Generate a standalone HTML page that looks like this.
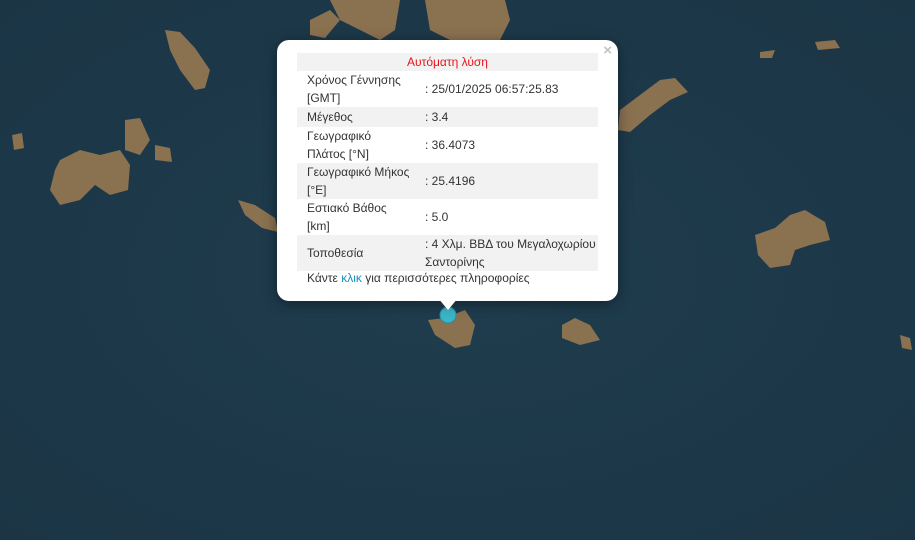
<!DOCTYPE html>
<html><head><meta charset="utf-8"><style>
body{margin:0;width:915px;height:540px;overflow:hidden;background:#1e3a4b;font-family:"Liberation Sans",Arial,sans-serif;position:relative}
svg.map{position:absolute;left:0;top:0}
.pop{position:absolute;left:277px;top:40px;width:341px;height:261px;background:#fff;border-radius:12px;box-shadow:0 3px 14px rgba(0,0,0,.4)}
.tip{position:absolute;left:438px;top:298px;width:0;height:0;border-left:10px solid transparent;border-right:10px solid transparent;border-top:12px solid #fff}
.x{position:absolute;right:6px;top:2px;color:#c3c3c3;font-size:15px;font-weight:bold}
table{position:absolute;left:20px;top:13px;width:301px;border-collapse:collapse;table-layout:fixed;font-size:12px;color:#333;line-height:18px}
td{padding:0 10px;vertical-align:middle}
td.l{padding:0 13px 0 10px}
td.v{padding:0 0 0 2px}
tr.g td{background:#f2f2f2}
.h{text-align:center;color:#e8141c;height:18px}
.f{position:absolute;left:30px;top:231px;font-size:12px;color:#333}
.f span{color:#1a8fbf}
</style></head><body>
<svg class="map" width="915" height="540">
<defs><radialGradient id="g" cx="50%" cy="50%" r="70%"><stop offset="0" stop-color="#1f3d4e"/><stop offset="1" stop-color="#1b3545"/></radialGradient></defs>
<rect width="915" height="540" fill="url(#g)"/>
<g fill="#8a7150">
<path d="M165 30 L180 32 L195 48 L210 70 L205 88 L195 90 L180 70 L170 50Z"/>
<path d="M125 120 L140 118 L150 140 L140 155 L125 150Z"/>
<path d="M155 145 L170 148 L172 162 L155 160Z"/>
<path d="M60 160 L80 150 L100 155 L120 150 L130 165 L128 190 L110 195 L95 185 L80 200 L60 205 L50 190 L55 170Z"/>
<path d="M12 135 L22 133 L24 148 L14 150Z"/>
<path d="M238 200 L255 205 L275 218 L278 232 L262 228 L245 215Z"/>
<path d="M310 20 L330 10 L340 20 L325 38 L310 35Z"/>
<path d="M330 0 L400 0 L395 30 L380 40 L360 30 L340 20Z"/>
<path d="M425 0 L505 0 L510 20 L500 40 L460 45 L430 30Z"/>
<path d="M620 110 L640 95 L660 80 L675 78 L688 92 L670 100 L650 115 L630 132 L618 130Z"/>
<path d="M755 235 L775 228 L790 215 L805 210 L825 222 L830 240 L810 245 L795 250 L790 265 L770 268 L758 255Z"/>
<path d="M562 325 L575 318 L590 325 L600 340 L580 345 L562 338Z"/>
<path d="M428 320 L445 318 L465 310 L475 325 L470 345 L455 348 L435 335Z"/>
<path d="M815 42 L835 40 L840 48 L818 50Z"/>
<path d="M760 52 L775 50 L772 58 L760 58Z"/>
<path d="M900 335 L910 338 L912 350 L902 348Z"/>
</g>
<circle cx="448" cy="315" r="8" fill="#3bb5c8" stroke="#2a8fa0" stroke-width="1"/>
</svg>
<div class="pop">
<div class="x">×</div>
<table>
<colgroup><col style="width:126px"><col style="width:175px"></colgroup>
<tr class="g"><td colspan="2" class="h">Αυτόματη λύση</td></tr>
<tr style="height:36px"><td class="l">Χρόνος Γέννησης [GMT]</td><td class="v">: 25/01/2025 06:57:25.83</td></tr>
<tr class="g" style="height:20px"><td class="l">Μέγεθος</td><td class="v">: 3.4</td></tr>
<tr style="height:35px"><td class="l">Γεωγραφικό Πλάτος [°N]</td><td class="v">: 36.4073</td></tr>
<tr class="g" style="height:35px"><td class="l">Γεωγραφικό Μήκος [°E]</td><td class="v">: 25.4196</td></tr>
<tr style="height:36px"><td class="l">Εστιακό Βάθος<br>[km]</td><td class="v">: 5.0</td></tr>
<tr class="g" style="height:35px"><td class="l">Τοποθεσία</td><td class="v">: 4 Χλμ. ΒΒΔ του Μεγαλοχωρίου Σαντορίνης</td></tr>
</table>
<div class="f">Κάντε <span>κλικ</span> για περισσότερες πληροφορίες</div>
</div>
<div class="tip"></div>
</body></html>
